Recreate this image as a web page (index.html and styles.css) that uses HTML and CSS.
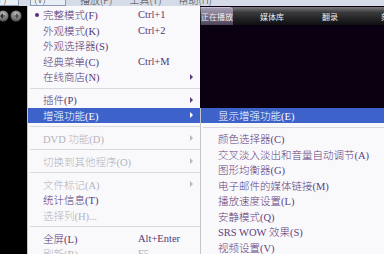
FILE: index.html
```html
<!DOCTYPE html>
<html>
<head>
    <title>Media Player Menu</title>
    <link rel="stylesheet" href="styles.css">
</head>
<body>
    <div class="topbar">
        <span class="tb boxed first">件(F)</span>
        <span class="tb boxed open">查看(V)</span>
        <span class="tb">播放(P)</span>
        <span class="tb">工具(T)</span>
        <span class="tb">帮助(H)</span>
    </div>

    <div class="main">
        <div class="side">
            <svg width="26" height="14" viewBox="0 0 26 14">
                <defs>
                    <radialGradient id="g" cx="50%" cy="35%" r="60%">
                        <stop offset="0" stop-color="#c8c8c8"/>
                        <stop offset="1" stop-color="#555"/>
                    </radialGradient>
                </defs>
                <circle cx="4" cy="7" r="5.5" fill="url(#g)"/>
                <path d="M6 7 H2 M4 5 L2 7 L4 9" stroke="#222" stroke-width="1.2" fill="none"/>
                <circle cx="17" cy="7" r="5.5" fill="url(#g)"/>
                <path d="M15 7 H19 M17 5 L19 7 L17 9" stroke="#444" stroke-width="1.2" fill="none"/>
            </svg>
        </div>

        <ul class="menu">
            <li class="row"><span class="dot"></span><span>完整模式(F)</span><span class="key">Ctrl+1</span></li>
            <li class="row"><span></span><span>外观模式(K)</span><span class="key">Ctrl+2</span></li>
            <li class="row"><span></span><span>外观选择器(S)</span></li>
            <li class="row"><span></span><span>经典菜单(C)</span><span class="key">Ctrl+M</span></li>
            <li class="row"><span></span><span>在线商店(N)</span><span></span><span class="arrow"></span></li>
            <li class="sep"></li>
            <li class="row"><span></span><span>插件(P)</span><span></span><span class="arrow"></span></li>
            <li class="row active"><span></span><span>增强功能(E)</span><span></span><span class="arrow"></span></li>
            <li class="sep"></li>
            <li class="row off"><span></span><span>DVD 功能(D)</span><span></span><span class="arrow"></span></li>
            <li class="sep"></li>
            <li class="row off"><span></span><span>切换到其他程序(O)</span><span></span><span class="arrow"></span></li>
            <li class="sep"></li>
            <li class="row off"><span></span><span>文件标记(A)</span><span></span><span class="arrow"></span></li>
            <li class="row"><span></span><span>统计信息(T)</span></li>
            <li class="row off"><span></span><span>选择列(H)...</span></li>
            <li class="sep"></li>
            <li class="row"><span></span><span>全屏(L)</span><span class="key">Alt+Enter</span></li>
            <li class="row off"><span></span><span>刷新(R)</span><span class="key">F5</span></li>
        </ul>

        <div class="right">
            <div class="player">
                <div class="tabs">
                    <span class="tab current">正在播放</span>
                    <span class="tab">媒体库</span>
                    <span class="tab">翻录</span>
                    <span class="tab">刻录</span>
                </div>
            </div>
            <ul class="menu sub">
                <li class="row active"><span>显示增强功能(E)</span></li>
                <li class="sep"></li>
                <li class="row"><span>颜色选择器(C)</span></li>
                <li class="row"><span>交叉淡入淡出和音量自动调节(A)</span></li>
                <li class="row"><span>图形均衡器(G)</span></li>
                <li class="row"><span>电子邮件的媒体链接(M)</span></li>
                <li class="row"><span>播放速度设置(L)</span></li>
                <li class="row"><span>安静模式(Q)</span></li>
                <li class="row"><span>SRS WOW 效果(S)</span></li>
                <li class="row"><span>视频设置(V)</span></li>
            </ul>
        </div>
    </div>
</body>
</html>
```

FILE: styles.css
```css
:root {
    --menu-bg: #f9f9fb;
    --text: #553873;
    --off: #b4b2bc;
    --sel: #3d62c9;
    --line: #d8d8de;
}

body {
    margin: 0;
    width: 384px;
    height: 254px;
    overflow: hidden;
    background: #000;
    font-family: "Liberation Serif", "Noto Sans CJK SC", serif;
}

.topbar {
    height: 6px;
    overflow: hidden;
    display: flex;
    align-items: flex-end;
    gap: 11px;
    background: #d5dce7;
    font-family: "Noto Sans CJK SC", sans-serif;
    font-weight: 300;
    font-size: 10px;
    color: #444;
}

.tb {
    line-height: 12px;
    padding: 0 3px;
}

.tb.first {
    margin-left: -6px;
    padding-left: 0;
    width: 20px;
}

.tb.boxed {
    border: 1px solid #8a9bb3;
    background: #e8eef6;
}

.tb.open {
    width: 28px;
}

.main {
    display: flex;
    height: 248px;
}

.side {
    width: 27px;
    flex: none;
    background: #000;
    padding-top: 3px;
    box-sizing: border-box;
}

.side svg {
    display: block;
    margin-left: -1px;
}

ul {
    list-style: none;
    margin: 0;
    padding: 0;
}

.menu {
    width: 173px;
    flex: none;
    background: var(--menu-bg);
    border-left: 1px solid #c4c4ca;
    box-sizing: border-box;
    padding-top: 1px;
    font-size: 10.5px;
    font-weight: 300;
    color: var(--text);
}

.row {
    height: 15.5px;
    display: grid;
    grid-template-columns: 15px 95px 1fr 14px;
    align-items: center;
    white-space: nowrap;
}

.row.off {
    color: var(--off);
}

.row.active {
    background: var(--sel);
    color: #fff;
}

.sep {
    height: 7.5px;
    display: flex;
    align-items: center;
}

.sep::after {
    content: "";
    flex: 1;
    margin-left: 2px;
    height: 1px;
    background: var(--line);
}

.dot {
    justify-self: end;
    margin-right: 4px;
    width: 4px;
    height: 4px;
    border-radius: 50%;
    background: #5a2b7a;
}

.key {
    font-family: "Liberation Serif", serif;
    font-weight: 400;
}

.arrow {
    width: 0;
    height: 0;
    border-top: 3px solid transparent;
    border-bottom: 3px solid transparent;
    border-left: 3px solid #5a3a7c;
    justify-self: center;
    margin-right: 4px;
}

.row.off .arrow {
    border-left-color: #b8b8c0;
}

.row.active .arrow {
    border-left-color: #fff;
}

.right {
    flex: 1;
    display: flex;
    flex-direction: column;
    min-width: 0;
}

.player {
    height: 101.75px;
    flex: none;
    background: #0b0012;
    padding-top: 1px;
    box-sizing: border-box;
}

.tabs {
    height: 18px;
    display: flex;
    align-items: center;
    background: linear-gradient(#7a7a7e, #3a3a3c 30%, #202022 70%, #0e0e10);
    font-family: "Noto Sans CJK SC", sans-serif;
    font-size: 8px;
    color: #eee;
    white-space: nowrap;
}

.tab {
    height: 100%;
    display: flex;
    align-items: center;
}

.tab:nth-child(2) {
    margin-left: 27px;
}

.tab:nth-child(3) {
    margin-left: 38px;
}

.tab:nth-child(4) {
    margin-left: 43px;
}

.tab.current {
    width: 34px;
    margin-left: 1px;
    background: linear-gradient(#a49cb0, #6e6680 60%, #4a4458);
    border-radius: 0 4px 0 0;
    border-top: 1px solid #c8c0d4;
    box-sizing: border-box;
}

.sub {
    width: auto;
    flex: 1;
    padding-top: 0;
    color: #5e4080;
}

.sub .row {
    display: flex;
    padding-left: 17px;
}
```
